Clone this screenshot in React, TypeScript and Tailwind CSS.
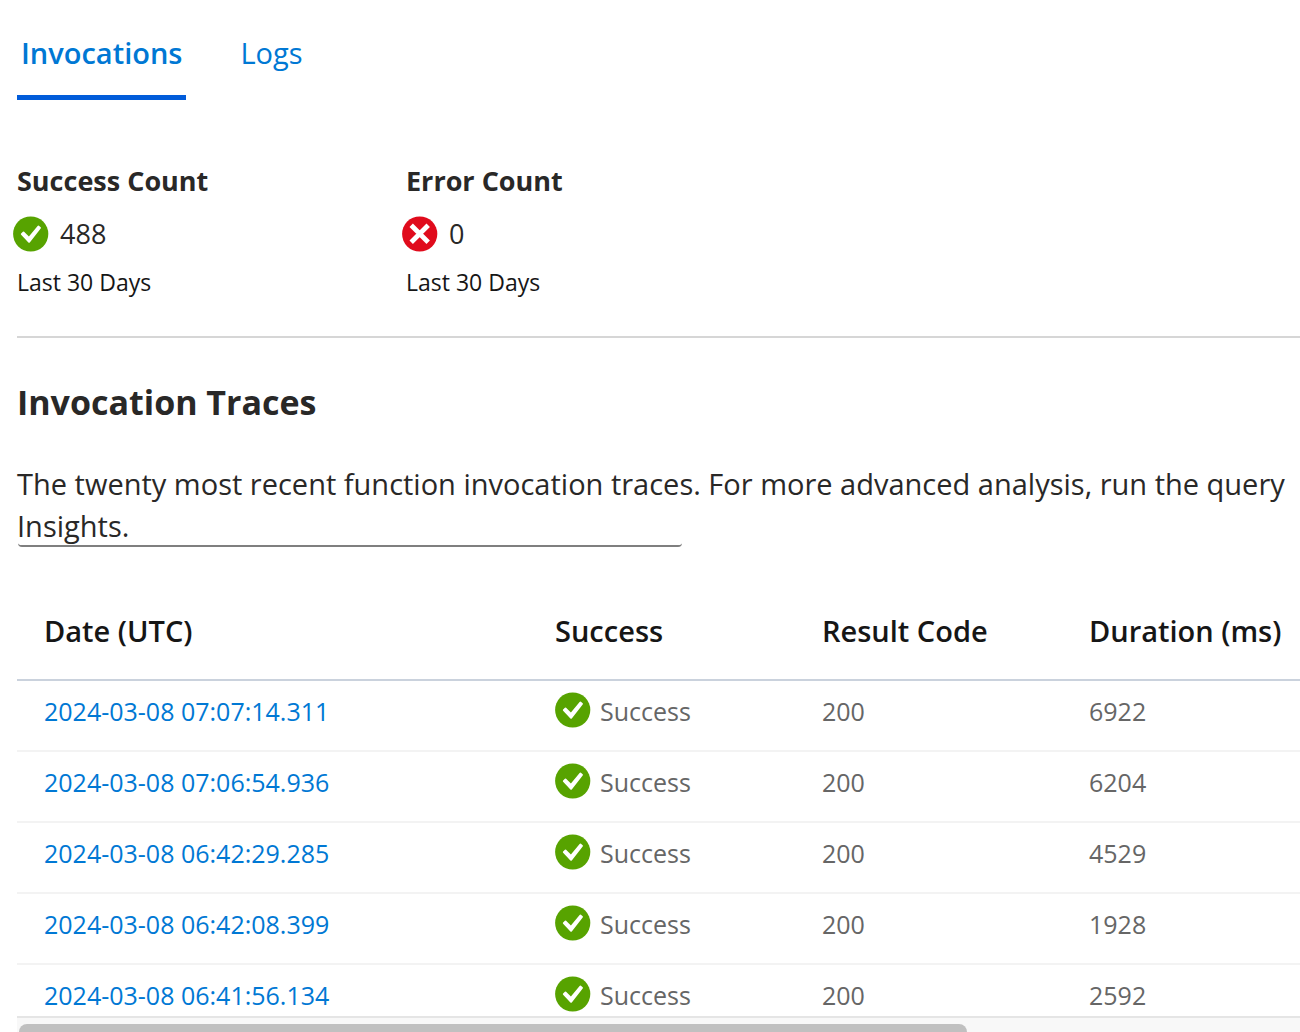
import type { ReactNode } from "react";

type Trace = { date: string; code: number; duration: number };

const traces: Trace[] = [
  { date: "2024-03-08 07:07:14.311", code: 200, duration: 6922 },
  { date: "2024-03-08 07:06:54.936", code: 200, duration: 6204 },
  { date: "2024-03-08 06:42:29.285", code: 200, duration: 4529 },
  { date: "2024-03-08 06:42:08.399", code: 200, duration: 1928 },
  { date: "2024-03-08 06:41:56.134", code: 200, duration: 2592 },
];

function SuccessIcon() {
  return (
    <svg viewBox="0 0 36 36" className="size-9 shrink-0" aria-hidden="true">
      <circle cx="17.7" cy="18" r="17.6" fill="#57a300" />
      <path
        d="M8.1 17.6 9.9 15.7Q10.5 15.2 11.1 15.8L15.9 20.6 24.6 9.9Q25.2 9.2 25.9 9.8L27.7 11.3Q28.2 11.8 27.7 12.5L16.8 26.4Q16.1 27.2 15.4 26.5L8.1 18.8Q7.5 18.2 8.1 17.6Z"
        fill="#fff"
      />
    </svg>
  );
}

function ErrorIcon() {
  return (
    <svg viewBox="0 0 36 36" className="size-9 shrink-0" aria-hidden="true">
      <circle cx="17.7" cy="18" r="17.6" fill="#e00b1c" />
      <path d="M9.2 9.2 26.2 26.2M26.2 9.2 9.2 26.2" fill="none" stroke="#fff" strokeWidth="4.8" />
    </svg>
  );
}

function Stat({ title, value, icon }: { title: string; value: number; icon: ReactNode }) {
  return (
    <div className="w-[389px]">
      <h3 className="text-[27px] leading-9 font-bold">{title}</h3>
      <div className="-ml-1 mt-[17px] flex h-9 items-center gap-[11px] text-[27px]">
        {icon}
        <span>{value}</span>
      </div>
      <p className="mt-3.5 text-[23px] leading-8 text-[#161616]">Last 30 Days</p>
    </div>
  );
}

export default function App() {
  return (
    <div className="flex h-screen flex-col overflow-hidden bg-white pl-[17px] font-['Open_Sans',sans-serif] text-[#292827]">
      <nav className="flex shrink-0 gap-[50px] pt-8 text-[29px] leading-[42px] text-[#0078d4]" role="tablist">
        <button role="tab" aria-selected="true" className="border-b-[5px] border-[#015cda] px-1 pb-[21px] font-semibold">
          Invocations
        </button>
        <button role="tab" aria-selected="false" className="border-b-[5px] border-transparent px-1 pb-[21px]">
          Logs
        </button>
      </nav>

      <section className="mt-[63px] flex shrink-0 border-b-2 border-[#d6d6d6] pb-[38px]">
        <Stat title="Success Count" value={488} icon={<SuccessIcon />} />
        <Stat title="Error Count" value={0} icon={<ErrorIcon />} />
      </section>

      <h2 className="mt-10 shrink-0 text-[34px] leading-[48px] font-bold">Invocation Traces</h2>
      <p className="mt-[37px] shrink-0 text-[29px] leading-[42px] whitespace-nowrap">
        The twenty most recent function invocation traces. For more advanced analysis, run the query
        <br />
        Insights.
      </p>
      <div className="-mt-1 ml-px h-1 w-[664px] shrink-0 rounded-b-sm border-b-2 border-[#7f7f7f]" />

      <div className="mt-9 min-h-0 flex-1 overflow-hidden">
        <table className="w-full table-fixed border-collapse text-left whitespace-nowrap">
          <thead>
            <tr className="h-[97px] border-b-2 border-[#cad2dd] text-[29px] text-[#161616]">
              <th className="w-[511px] pl-[27px] font-semibold">Date (UTC)</th>
              <th className="w-[267px] pl-[27px] font-semibold">Success</th>
              <th className="w-[267px] pl-[27px] font-semibold">Result Code</th>
              <th className="pl-[27px] font-semibold">Duration (ms)</th>
            </tr>
          </thead>
          <tbody className="text-[25px] leading-[38px] text-[#666]">
            {traces.map((t) => (
              <tr key={t.date} className="h-[71px] border-b-2 border-[#f3f3f3]">
                <td className="pb-2.5 pl-[27px]">
                  <a href="#" className="text-[#0078d4]">{t.date}</a>
                </td>
                <td className="pb-2.5 pl-[27px]">
                  <div className="flex items-start gap-[9px]">
                    <SuccessIcon />
                    <span>Success</span>
                  </div>
                </td>
                <td className="pb-2.5 pl-[27px]">{t.code}</td>
                <td className="pb-2.5 pl-[27px]">{t.duration}</td>
              </tr>
            ))}
          </tbody>
        </table>
      </div>
      <div className="h-4 shrink-0 border-t-2 border-[#e5e5e5] bg-[#f8f8f8] pt-1.5 pl-0.5">
        <div className="h-4 w-[74%] rounded-t-lg bg-[#c0c0c0]" />
      </div>
    </div>
  );
}
